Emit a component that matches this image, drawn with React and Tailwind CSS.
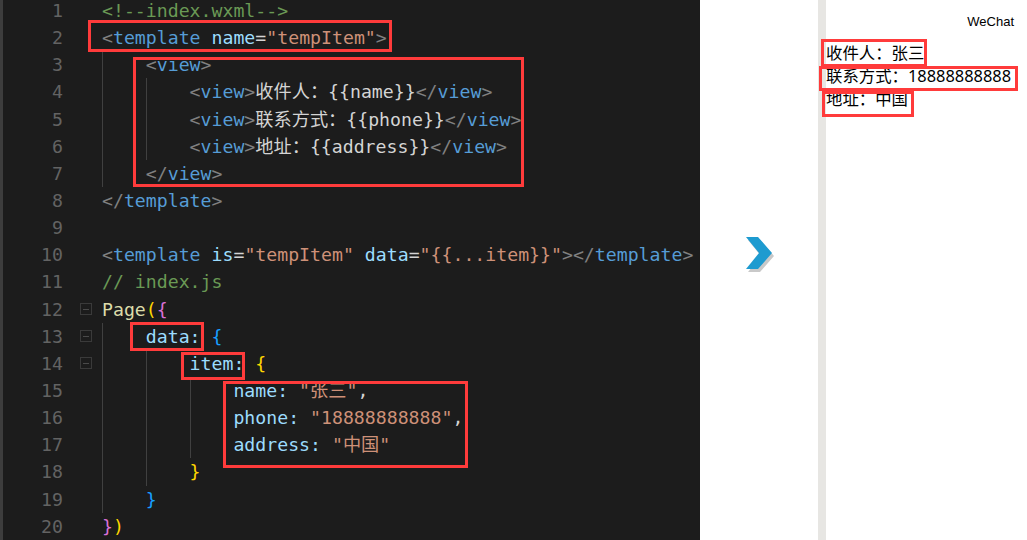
import React from "react";

// --- token colours ---
const C = {
  punc: "text-[#808080]",
  tag: "text-[#569cd6]",
  attr: "text-[#9cdcfe]",
  str: "text-[#ce9178]",
  txt: "text-[#d4d4d4]",
  cmt: "text-[#6a9955]",
  fn: "text-[#dcdcaa]",
  b1: "text-[#ffd700]",
  b2: "text-[#da70d6]",
  b3: "text-[#179fff]",
};

const view = (label, expr) => [
  ["<", "punc"],
  ["view", "tag"],
  [">", "punc"],
  [label + expr, "txt"],
  ["</", "punc"],
  ["view", "tag"],
  [">", "punc"],
];

const lines = [
  { indent: 0, tokens: [["<!--index.wxml-->", "cmt"]] },
  {
    indent: 0,
    tokens: [
      ["<", "punc"],
      ["template", "tag"],
      [" ", "txt"],
      ["name", "attr"],
      ["=", "txt"],
      ['"tempItem"', "str"],
      [">", "punc"],
    ],
  },
  { indent: 1, tokens: [["<", "punc"], ["view", "tag"], [">", "punc"]] },
  { indent: 2, tokens: view("收件人：", "{{name}}") },
  { indent: 2, tokens: view("联系方式：", "{{phone}}") },
  { indent: 2, tokens: view("地址：", "{{address}}") },
  { indent: 1, tokens: [["</", "punc"], ["view", "tag"], [">", "punc"]] },
  { indent: 0, tokens: [["</", "punc"], ["template", "tag"], [">", "punc"]] },
  { indent: 0, tokens: [] },
  {
    indent: 0,
    tokens: [
      ["<", "punc"],
      ["template", "tag"],
      [" ", "txt"],
      ["is", "attr"],
      ["=", "txt"],
      ['"tempItem"', "str"],
      [" ", "txt"],
      ["data", "attr"],
      ["=", "txt"],
      ['"{{...item}}"', "str"],
      ["></", "punc"],
      ["template", "tag"],
      [">", "punc"],
    ],
  },
  { indent: 0, tokens: [["// index.js", "cmt"]] },
  { indent: 0, fold: true, tokens: [["Page", "fn"], ["(", "b1"], ["{", "b2"]] },
  { indent: 1, fold: true, tokens: [["data:", "attr"], [" ", "txt"], ["{", "b3"]] },
  { indent: 2, fold: true, tokens: [["item:", "attr"], [" ", "txt"], ["{", "b1"]] },
  { indent: 3, tokens: [["name:", "attr"], [" ", "txt"], ['"张三"', "str"], [",", "txt"]] },
  { indent: 3, tokens: [["phone:", "attr"], [" ", "txt"], ['"18888888888"', "str"], [",", "txt"]] },
  { indent: 3, tokens: [["address:", "attr"], [" ", "txt"], ['"中国"', "str"]] },
  { indent: 2, tokens: [["}", "b1"]] },
  { indent: 1, tokens: [["}", "b3"]] },
  { indent: 0, tokens: [["}", "b2"], [")", "b1"]] },
];

// red highlight boxes drawn over the editor (page coords minus 3px border)
const editorBoxes = [
  "left-[85px] top-[20px] w-[304px] h-[32px]",
  "left-[130px] top-[57px] w-[391px] h-[130px]",
  "left-[127px] top-[322px] w-[74px] h-[29px]",
  "left-[178px] top-[352px] w-[64px] h-[28px]",
  "left-[220px] top-[381px] w-[245px] h-[87px]",
];

const FoldIcon = () => (
  <span className="w-[12px] h-[12px] border border-[#3a3a3a] flex items-center justify-center">
    <span className="w-[6px] h-px bg-[#4a4a4a]" />
  </span>
);

const Chevron = () => (
  <svg width="36" height="40" viewBox="0 0 36 40">
    <path d="M4 4 H16 L30 20 L16 36 H4 L17 20 Z" fill="#c9c9c9" />
    <path d="M2 1 H14 L28 17 L14 33 H2 L15 17 Z" fill="#1e9bd0" />
  </svg>
);

export default function App() {
  return (
    <div className="w-[1027px] h-[540px] flex overflow-hidden bg-white">
      <div className="w-[3px] bg-[#3d3d3d]" />

      {/* --- Editor --- */}
      <div
        className="relative w-[697px] bg-[#1c1c1c] text-[18.2px] leading-[27.15px] whitespace-pre"
        style={{ fontFamily: '"DejaVu Sans Mono", "Noto Sans CJK SC", monospace' }}
      >
        <div className="-mt-[3px]">
          {lines.map((line, i) => (
            <div key={i} className="flex h-[27.15px]">
              <span className="w-[60px] text-right text-[#636363]">{i + 1}</span>
              <span className="w-[39px] pl-[17px] flex items-center">
                {line.fold && <FoldIcon />}
              </span>
              {Array.from({ length: line.indent }).map((_, j) => (
                <span key={j} className="inline-block w-[4ch] border-l border-[#404040]" />
              ))}
              <span>
                {line.tokens.map(([t, c], k) => (
                  <span key={k} className={C[c]}>
                    {t}
                  </span>
                ))}
              </span>
            </div>
          ))}
        </div>

        {editorBoxes.map((b, i) => (
          <div key={i} className={`absolute border-[3px] border-[#ff3b3b] ${b}`} />
        ))}
      </div>

      {/* --- Arrow gap --- */}
      <div className="w-[118px] flex items-center justify-center pl-[6px] pb-[28px]">
        <Chevron />
      </div>
      <div className="w-[8px] bg-[#e7e6e3]" />

      {/* --- Simulator --- */}
      <div className="relative flex-1 flex flex-col">
        <div
          className="h-[42px] pt-[12px] pr-[13px] text-right text-[13px] text-black"
          style={{ fontFamily: '"Liberation Sans", Arial, sans-serif' }}
        >
          WeChat
        </div>
        <div
          className="-mt-[1px] text-[16.4px] leading-[23px] text-black"
          style={{ fontFamily: '"Noto Sans", "Noto Sans CJK SC", sans-serif' }}
        >
          <div>收件人：张三</div>
          <div>联系方式：18888888888</div>
          <div>地址：中国</div>
        </div>

        <div className="absolute left-[-5px] top-[39px] w-[106px] h-[28px] border-[3px] border-[#ff3b3b]" />
        <div className="absolute left-[-7px] top-[66px] w-[199px] h-[25px] border-[3px] border-[#ff3b3b]" />
        <div className="absolute left-[-4px] top-[91px] w-[92px] h-[26px] border-[3px] border-[#ff3b3b]" />
      </div>
    </div>
  );
}
